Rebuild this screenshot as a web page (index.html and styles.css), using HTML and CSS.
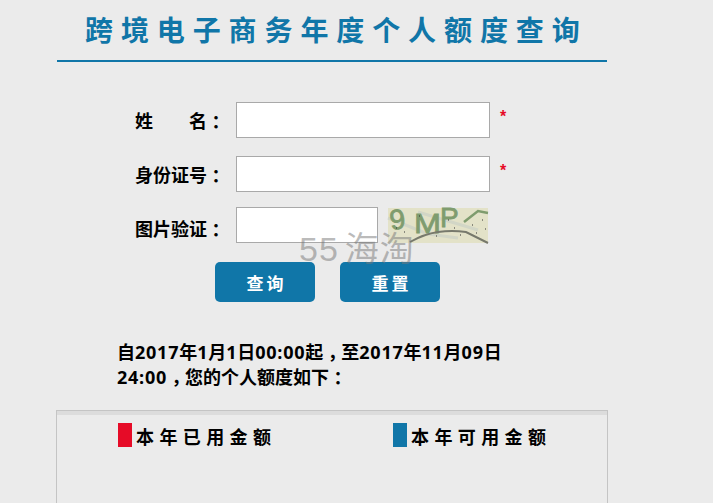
FILE: index.html
```html
<!DOCTYPE html>
<html lang="zh-CN">
<head>
  <meta charset="UTF-8">
  <title>跨境电子商务年度个人额度查询</title>
  <link rel="stylesheet" href="styles.css">
</head>
<body>
  <div class="wrap">
    <h1 class="title">跨境电子商务年度个人额度查询</h1>

    <div class="form">
      <div class="row">
        <label class="label">姓<span class="gap"></span>名<span class="mark">：</span></label>
        <input class="field" type="text">
        <span class="star">*</span>
      </div>
      <div class="row">
        <label class="label">身份证号<span class="mark">：</span></label>
        <input class="field" type="text">
        <span class="star">*</span>
      </div>
      <div class="row row-code">
        <label class="label">图片验证<span class="mark">：</span></label>
        <input class="field field-code" type="text">
        <svg class="captcha" width="100" height="35" viewBox="0 0 100 35">
          <rect width="100" height="35" fill="#e3e2c8"/>
          <path d="M0 10L40 26L70 30M30 4L90 22" stroke="#d2d6c6" stroke-width="3" fill="none"/>
          <text x="2" y="21" class="captcha-text" transform="rotate(-8 10 14)">9</text>
          <text x="26" y="25" class="captcha-text" textLength="27" lengthAdjust="spacingAndGlyphs">M</text>
          <text x="52" y="19" class="captcha-text">P</text>
          <path d="M76 14L90 3L100 5" stroke="#7f9c6e" stroke-width="2.5" fill="none"/>
          <path d="M22 34Q36 26 50 24T78 24L100 35" stroke="#77796c" stroke-width="2" fill="none"/>
          <path d="M8 20h1M16 24h1M31 8h1M48 28h1M60 12h1M66 20h1M72 27h1M84 17h1M88 25h1M94 12h1M97 21h1" stroke="#333" stroke-width="1.2"/>
        </svg>
      </div>
      <div class="actions">
        <button class="btn" type="button">查询</button>
        <button class="btn" type="button">重置</button>
      </div>
    </div>

    <div class="notice">
      <div>自<span class="num">2017</span>年<span class="num">1</span>月<span class="num">1</span>日<span class="num">00:00</span>起<span class="mark">，</span>至<span class="num">2017</span>年<span class="num">11</span>月<span class="num">09</span>日</div>
      <div><span class="num">24:00</span><span class="mark">，</span>您的个人额度如下<span class="mark">：</span></div>
    </div>

    <div class="panel">
      <div class="legend">
        <div class="legend-item"><span class="swatch swatch-used"></span>本年已用金额</div>
        <div class="legend-item"><span class="swatch swatch-free"></span>本年可用金额</div>
      </div>
    </div>
  </div>

  <div class="watermark"><span class="watermark-num">55</span>海淘</div>
</body>
</html>
```

FILE: styles.css
```css
* {
  box-sizing: border-box;
}

html, body {
  height: 503px;
  overflow: hidden;
}

body {
  margin: 0;
  background-color: #ebebeb;
  color: #000;
  font-family: "Open Sans", "Noto Sans CJK SC", sans-serif;
}

.wrap {
  width: 550px;
  margin-left: 57px;
}

.title {
  margin: 0;
  height: 62px;
  padding: 11px 0 0 28px;
  border-bottom: 2px solid #1076a8;
  color: #1076a8;
  font-size: 28px;
  line-height: 38px;
  font-weight: bold;
  letter-spacing: 7.9px;
  white-space: nowrap;
}

.form {
  padding-top: 40px;
}

.row {
  display: flex;
  align-items: center;
  height: 36px;
  margin-bottom: 18px;
}

.row-code {
  margin-top: -3px;
  margin-bottom: 19px;
}

.label {
  width: 179px;
  padding-left: 78px;
  font-size: 18px;
  font-weight: bold;
  white-space: nowrap;
}

.row-code .label {
  padding-top: 5px;
}

.gap {
  display: inline-block;
  width: 36px;
}

/* full-width punctuation sits centred in its cell */
.mark {
  padding: 0 0.25em;
  font-feature-settings: "halt";
}

.field {
  width: 254px;
  height: 36px;
  border: 1px solid #a9a9a9;
  background: #fff;
  padding: 0 6px;
}

.field-code {
  width: 142px;
}

.star {
  margin-left: 10px;
  padding-bottom: 6px;
  color: #e60b27;
  font-family: "Liberation Sans", sans-serif;
  font-size: 16px;
  font-weight: bold;
}

.captcha {
  display: block;
  margin-left: 10px;
  overflow: visible;
}

.captcha-text {
  font-family: "Liberation Sans", sans-serif;
  font-size: 28px;
  fill: #7f9c6e;
  stroke: #7f9c6e;
  stroke-width: 0.8;
}

.actions {
  display: flex;
  gap: 25px;
  padding-left: 158px;
}

.btn {
  width: 100px;
  height: 40px;
  padding: 0 0 0 3px;
  border: none;
  border-radius: 5px;
  background-color: #1076a8;
  color: #fff;
  font-family: inherit;
  font-size: 17px;
  font-weight: bold;
  letter-spacing: 3px;
}

.notice {
  margin: 38px 0 0 60px;
  font-size: 18px;
  line-height: 25px;
  font-weight: bold;
  white-space: nowrap;
}

.num {
  letter-spacing: 0.75px;
}

.panel {
  height: 100px;
  margin: 20px -1px 0;
  border: 1px solid #c4c4c4;
  box-shadow: inset 0 4px #dcdcdc;
  padding: 12px 0 0 61px;
}

.legend {
  display: flex;
}

.legend-item {
  display: flex;
  flex: none;
  align-items: center;
  width: 275px;
  font-size: 18px;
  font-weight: bold;
  letter-spacing: 5.4px;
}

.swatch {
  width: 14px;
  height: 24px;
  margin: 0 4px 2px 0;
}

.swatch-used {
  background-color: #e60b27;
}

.swatch-free {
  background-color: #1076a8;
}

.watermark {
  position: absolute;
  left: 299px;
  top: 229px;
  color: rgba(120, 120, 120, 0.5);
  font-family: "Liberation Sans", "Noto Sans CJK SC", sans-serif;
  font-size: 34px;
  line-height: 40px;
  letter-spacing: 1px;
}

.watermark-num {
  margin-right: 6px;
}
```
